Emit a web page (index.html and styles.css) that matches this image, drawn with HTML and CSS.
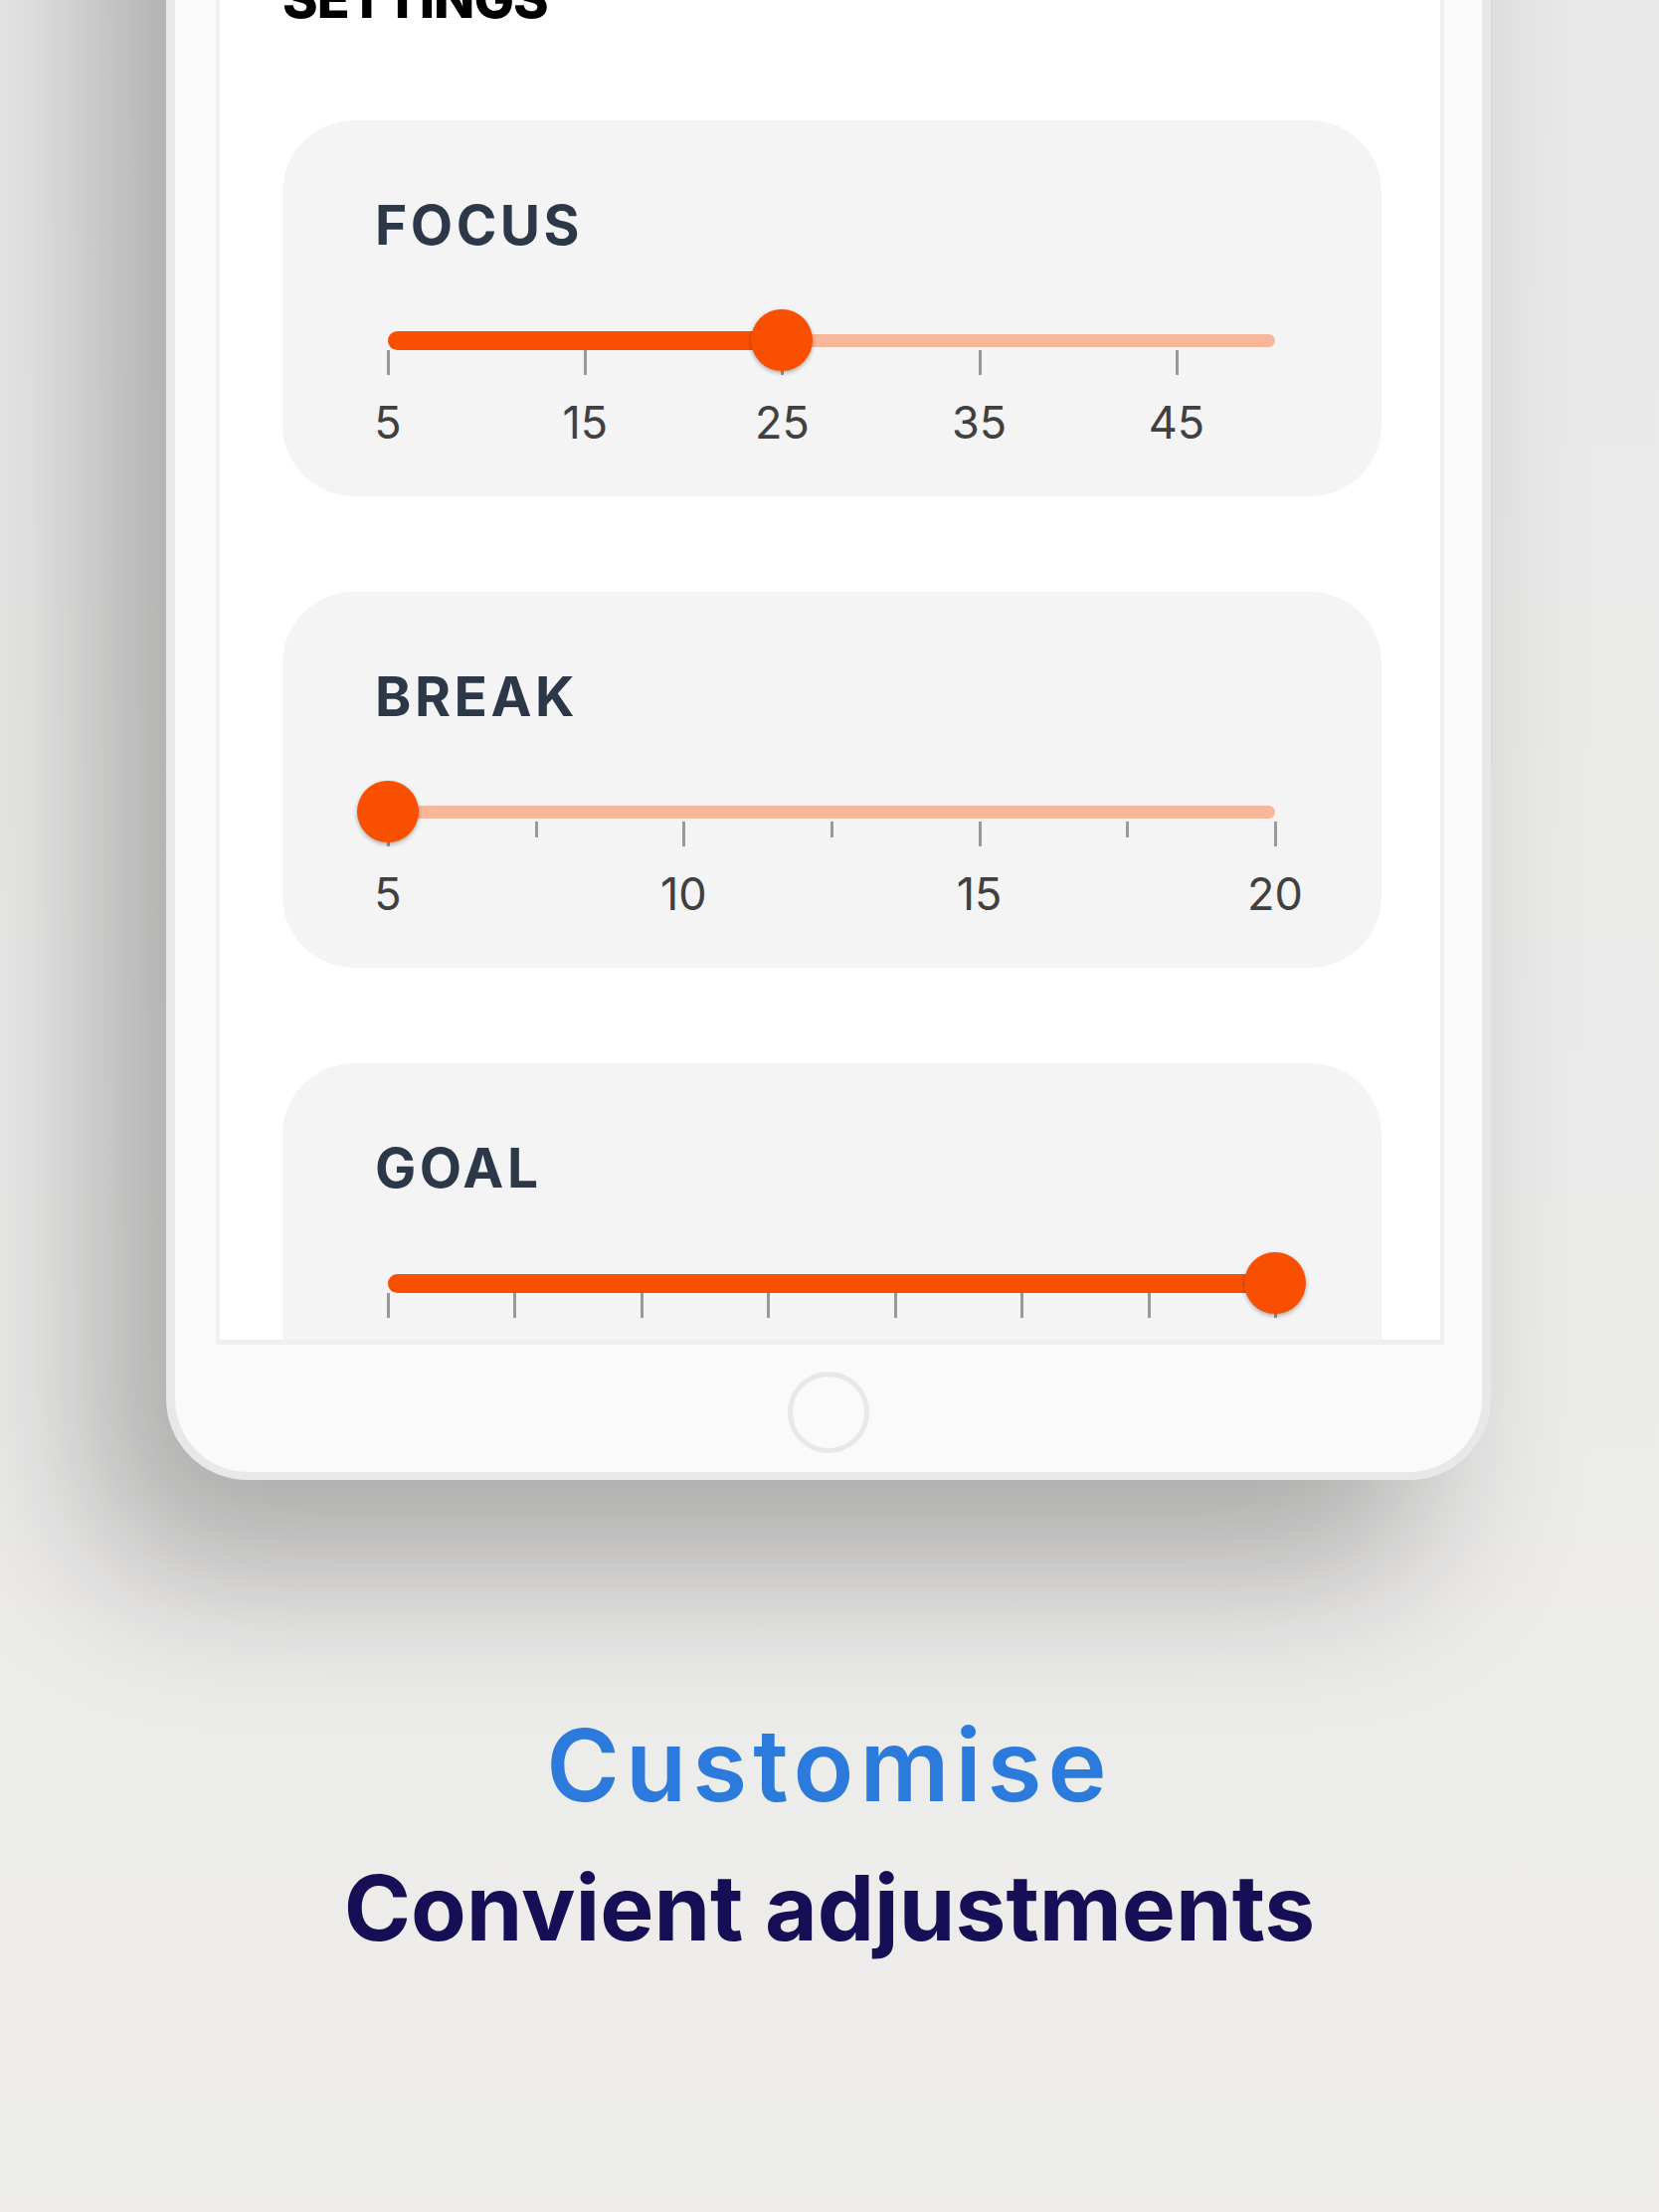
FILE: index.html
```html
<!DOCTYPE html>
<html lang="en">
<head>
<meta charset="utf-8">
<title>Customise – Settings</title>
<link rel="stylesheet" href="styles.css">
</head>
<body>
  <div class="device">
    <div class="screen">
      <h1 class="screen-title">SETTINGS</h1>

      <section class="card">
        <h2 class="card-title">FOCUS</h2>
        <div class="slider">
          <div class="track"><div class="track-active" style="width:44.444%"></div></div>
          <span class="tick" style="left:0%"></span>
          <span class="tick" style="left:22.222%"></span>
          <span class="tick" style="left:44.444%"></span>
          <span class="tick" style="left:66.667%"></span>
          <span class="tick" style="left:88.889%"></span>
          <span class="thumb" style="left:44.444%"></span>
        </div>
        <div class="labels">
          <span class="label" style="left:0%">5</span>
          <span class="label" style="left:22.222%">15</span>
          <span class="label" style="left:44.444%">25</span>
          <span class="label" style="left:66.667%">35</span>
          <span class="label" style="left:88.889%">45</span>
        </div>
      </section>

      <section class="card">
        <h2 class="card-title">BREAK</h2>
        <div class="slider">
          <div class="track"><div class="track-active" style="width:0%"></div></div>
          <span class="tick" style="left:0%"></span>
          <span class="tick minor" style="left:16.667%"></span>
          <span class="tick" style="left:33.333%"></span>
          <span class="tick minor" style="left:50%"></span>
          <span class="tick" style="left:66.667%"></span>
          <span class="tick minor" style="left:83.333%"></span>
          <span class="tick" style="left:100%"></span>
          <span class="thumb" style="left:0%"></span>
        </div>
        <div class="labels">
          <span class="label" style="left:0%">5</span>
          <span class="label" style="left:33.333%">10</span>
          <span class="label" style="left:66.667%">15</span>
          <span class="label" style="left:100%">20</span>
        </div>
      </section>

      <section class="card">
        <h2 class="card-title">GOAL</h2>
        <div class="slider">
          <div class="track"><div class="track-active" style="width:100%"></div></div>
          <span class="tick" style="left:0%"></span>
          <span class="tick" style="left:14.286%"></span>
          <span class="tick" style="left:28.571%"></span>
          <span class="tick" style="left:42.857%"></span>
          <span class="tick" style="left:57.143%"></span>
          <span class="tick" style="left:71.429%"></span>
          <span class="tick" style="left:85.714%"></span>
          <span class="tick" style="left:100%"></span>
          <span class="thumb" style="left:100%"></span>
        </div>
      </section>
    </div>
    <div class="home-row"><div class="home-button"></div></div>
  </div>

  <div class="caption">
    <h2 class="caption-title">Customise</h2>
    <p class="caption-sub">Convient adjustments</p>
  </div>
</body>
</html>
```

FILE: styles.css
```css
html, body {
  margin: 0;
  padding: 0;
}

body {
  width: 1668px;
  height: 2224px;
  overflow: hidden;
  background: linear-gradient(180deg, #e9e9e9 0%, #ebebea 55%, #eeedeb 100%);
  font-family: "Inter", "Liberation Sans", sans-serif;
}

.device {
  width: 1332px;
  box-sizing: border-box;
  margin: -400px 0 0 167px;
  background: #fafafa;
  border: 9px solid #e8e8e8;
  border-top: none;
  border-bottom-width: 8px;
  border-radius: 0 0 82px 82px;
  box-shadow: -70px 90px 160px rgba(0, 0, 0, 0.28);
}

.screen {
  box-sizing: border-box;
  height: 1752px;
  margin: 0 38px 0 41px;
  padding: 372px 59px 0 63px;
  background: #ffffff;
  border: 4px solid #efefef;
  border-top: none;
  border-bottom-width: 5px;
  overflow: hidden;
}

.screen-title {
  margin: 0 0 95px 0;
  font-size: 54px;
  line-height: 1;
  font-weight: 800;
  color: #000000;
  letter-spacing: -1px;
}

.card {
  box-sizing: border-box;
  min-height: 378px;
  background: #f4f4f4;
  border-radius: 72px;
  padding: 78px 93px 52px 93px;
  margin-bottom: 96px;
}

.card-title {
  margin: 0;
  font-size: 55px;
  line-height: 1;
  font-weight: 700;
  color: #2c3748;
  letter-spacing: 3.5px;
}

.slider {
  position: relative;
  height: 62px;
  margin: 57px 14px 0 13px;
  display: flex;
  align-items: center;
}

.track {
  flex: 1;
  height: 13px;
  border-radius: 7px;
  background: #f8b69b;
  display: flex;
  align-items: center;
}

.track-active {
  height: 19px;
  border-radius: 10px;
  background: #f94f00;
}

.tick {
  position: absolute;
  top: 41px;
  width: 3px;
  height: 25px;
  margin-left: -1px;
  background: #999999;
}

.tick.minor {
  height: 16px;
}

.thumb {
  position: absolute;
  top: 0;
  width: 62px;
  height: 62px;
  margin-left: -31px;
  border-radius: 50%;
  background: #f94f00;
  box-shadow: 0 2px 4px rgba(0, 0, 0, 0.3);
}

.labels {
  position: relative;
  height: 45px;
  margin: 29px 14px 0 13px;
}

.label {
  position: absolute;
  top: 0;
  transform: translateX(-50%);
  font-size: 45px;
  line-height: 1;
  color: #404040;
}

.home-row {
  display: flex;
  justify-content: center;
  padding: 27px 0 19px 0;
}

.home-button {
  box-sizing: border-box;
  width: 82px;
  height: 82px;
  border-radius: 50%;
  border: 5px solid #e8e8e8;
}

.caption {
  margin-top: 237px;
  text-align: center;
}

.caption-title {
  margin: 0;
  font-size: 100px;
  line-height: 1;
  font-weight: 600;
  color: #2c7adb;
  letter-spacing: 6px;
}

.caption-sub {
  margin: 48px 0 0 0;
  font-size: 91px;
  line-height: 1;
  font-weight: 700;
  color: #170f56;
}
```
